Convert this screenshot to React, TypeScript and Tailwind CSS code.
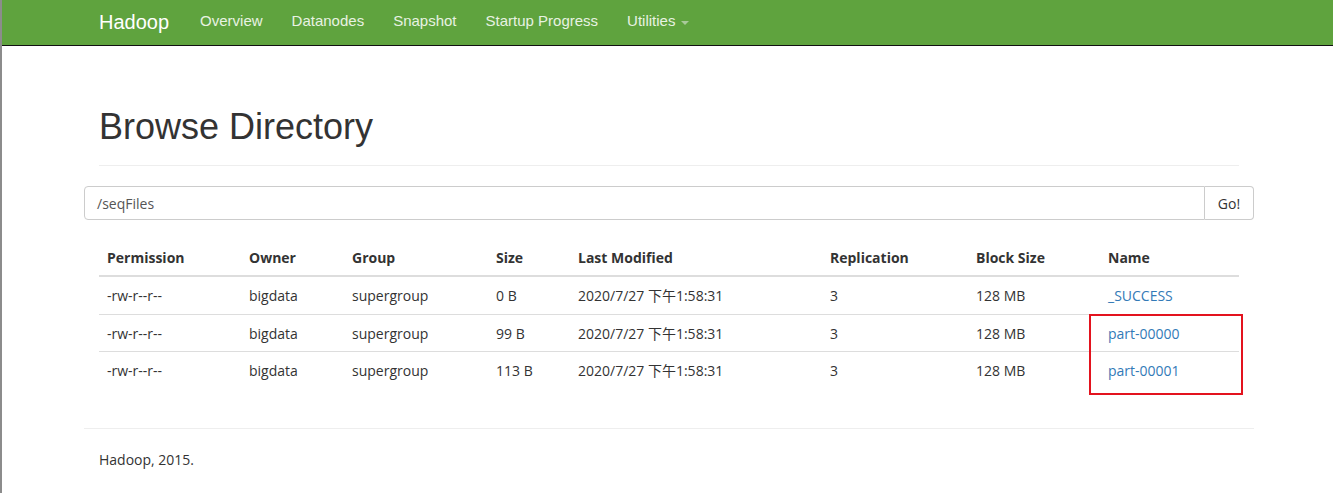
import React from "react";

const rows = [
  { perm: "-rw-r--r--", owner: "bigdata", group: "supergroup", size: "0 B", name: "_SUCCESS" },
  { perm: "-rw-r--r--", owner: "bigdata", group: "supergroup", size: "99 B", name: "part-00000" },
  { perm: "-rw-r--r--", owner: "bigdata", group: "supergroup", size: "113 B", name: "part-00001" },
];

const cols = [
  { label: "Permission", w: "w-[142px]" },
  { label: "Owner", w: "w-[103px]" },
  { label: "Group", w: "w-[144px]" },
  { label: "Size", w: "w-[82px]" },
  { label: "Last Modified", w: "w-[252px]" },
  { label: "Replication", w: "w-[146px]" },
  { label: "Block Size", w: "w-[132px]" },
  { label: "Name", w: "w-[139px]" },
];

export default function App() {
  return (
    <div className="min-h-[493px] border-l-2 border-[#8c8c8c] bg-white text-[14px] text-[#333]">
      <nav className="h-[46px] border-b border-[#111] bg-[#5fa33e]">
        <div className="ml-[82px] flex h-[43px] w-[1170px] items-center px-[15px] font-['Liberation_Sans',sans-serif]">
          <span className="mr-[31px] text-[20px] text-white">Hadoop</span>
          <div className="flex items-center gap-[29px] text-[15px] text-[#e8f2e2]">
            <span>Overview</span>
            <span>Datanodes</span>
            <span>Snapshot</span>
            <span>Startup Progress</span>
            <span className="flex items-center">
              Utilities
              <span className="ml-[6px] mt-[2px] h-0 w-0 border-x-[4px] border-t-[4px] border-x-transparent border-t-[#a9c99a]"></span>
            </span>
          </div>
        </div>
      </nav>

      <div className="ml-[82px] w-[1170px] px-[15px] font-['Open_Sans','Noto_Sans_CJK_SC',sans-serif]">
        <div className="mt-[61px] border-b border-[#eee] pb-[18px]">
          <h1 className="h-[40px] font-['Liberation_Sans',sans-serif] text-[36px] leading-[40px] text-[#333]">
            Browse Directory
          </h1>
        </div>

        <div className="-mx-[15px] mt-[20px] flex h-[34px]">
          <div className="flex flex-1 items-center rounded-l-[4px] border border-[#ccc] px-[12px] text-[14px] text-[#555]">
            /seqFiles
          </div>
          <div className="flex w-[49px] items-center justify-center rounded-r-[4px] border border-l-0 border-[#ccc] text-[14px] text-[#333]">
            Go!
          </div>
        </div>

        <div className="relative mt-[20px]">
          <div className="flex h-[37px] items-center border-b-2 border-[#ddd]">
            {cols.map((c) => (
              <div key={c.label} className={`${c.w} px-[8px] font-bold`}>
                {c.label}
              </div>
            ))}
          </div>
          {rows.map((r, i) => (
            <div
              key={r.name}
              className={`flex h-[37px] items-center ${i > 0 ? "border-t border-[#ddd]" : ""}`}
            >
              <div className="w-[142px] px-[8px]">{r.perm}</div>
              <div className="w-[103px] px-[8px]">{r.owner}</div>
              <div className="w-[144px] px-[8px]">{r.group}</div>
              <div className="w-[82px] px-[8px]">{r.size}</div>
              <div className="w-[252px] px-[8px]">2020/7/27 下午1:58:31</div>
              <div className="w-[146px] px-[8px]">3</div>
              <div className="w-[132px] px-[8px]">128 MB</div>
              <div className="w-[139px] px-[8px] text-[#337ab7]">{r.name}</div>
            </div>
          ))}
          <div className="absolute left-[990px] top-[74px] h-[81px] w-[154px] border-2 border-[#e3131e]"></div>
        </div>

        <div className="-mx-[15px] mt-[40px] border-t border-[#eee] px-[15px] pt-[21px]">
          <p className="leading-[20px]">Hadoop, 2015.</p>
        </div>
      </div>
    </div>
  );
}
